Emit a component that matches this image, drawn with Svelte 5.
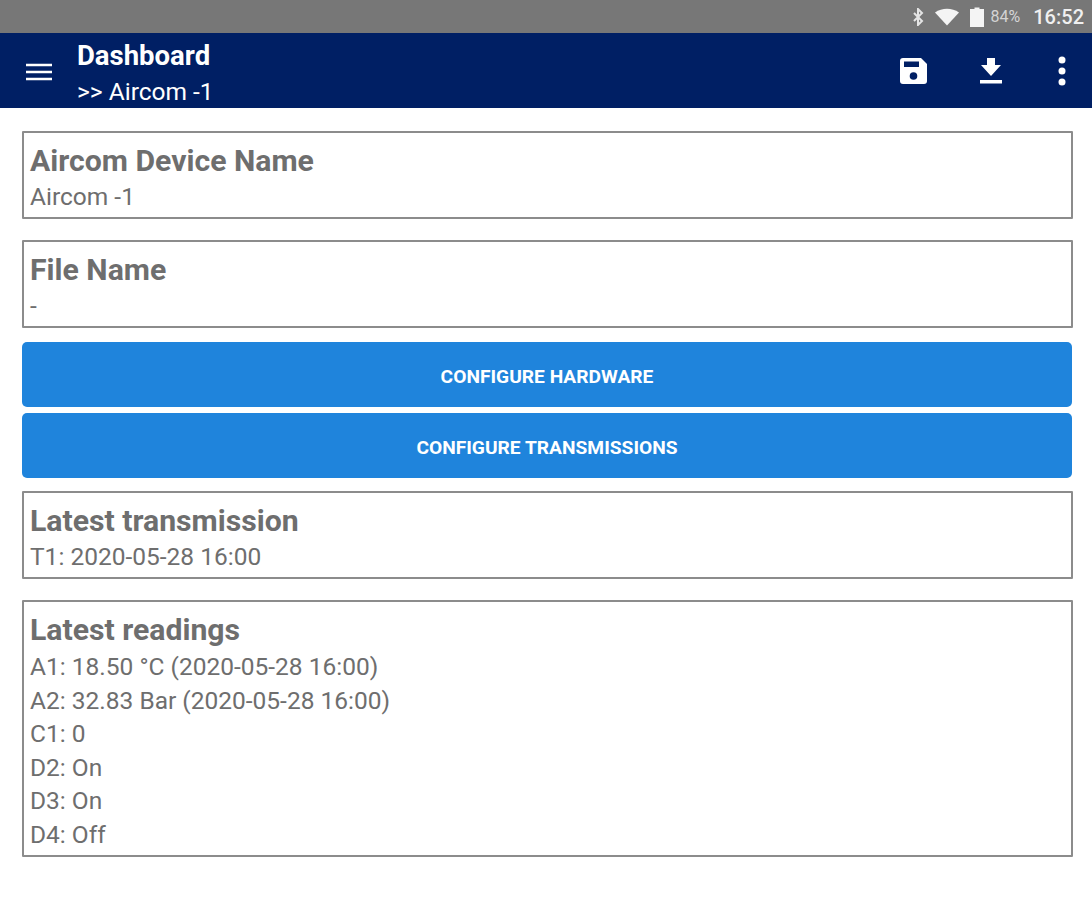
<script>
	const readings = [
		'A1: 18.50 °C (2020-05-28 16:00)',
		'A2: 32.83 Bar (2020-05-28 16:00)',
		'C1: 0',
		'D2: On',
		'D3: On',
		'D4: Off'
	];
</script>

<div class="screen">
	<div class="statusbar">
		<svg class="bt" viewBox="0 0 14 18" width="14" height="18">
			<path d="M3 5l8 8-4 4V1l4 4-8 8" fill="none" stroke="#e4e4e4" stroke-width="2" />
		</svg>
		<svg class="wifi" viewBox="0 0 24 18" width="24" height="18">
			<path d="M0 4.500C7-.5 17-.5 24 4.500L12 17.500z" fill="#f4f4f4" />
		</svg>
		<svg class="batt" viewBox="0 0 14 20" width="14" height="20">
			<path d="M4.500 0.500h5V2H14v18H0V2h4.500z" fill="#f4f4f4" />
		</svg>
		<span class="pct">84%</span>
		<span class="time">16:52</span>
	</div>

	<header class="appbar">
		<svg class="menu" viewBox="0 0 26 18" width="26" height="18">
			<path d="M0 2h26M0 9h26M0 16h26" stroke="#fff" stroke-width="2.600" />
		</svg>
		<div class="titles">
			<div class="title">Dashboard</div>
			<div class="subtitle">&gt;&gt; Aircom -1</div>
		</div>
		<div class="actions">
			<svg class="save" viewBox="0 0 27 26" width="27" height="26">
				<path d="M3 0h18l6 6v17a3 3 0 0 1-3 3H3a3 3 0 0 1-3-3V3a3 3 0 0 1 3-3z" fill="#fff" />
				<rect x="4" y="3.500" width="15" height="5.500" fill="#001f64" />
				<circle cx="13.500" cy="18" r="3.800" fill="#001f64" />
			</svg>
			<svg class="download" viewBox="0 0 22 26" width="22" height="26">
				<path d="M7 0h8v7h6L11 18 1 7h6zM0 22h22v3.500H0z" fill="#fff" />
			</svg>
			<svg viewBox="0 0 8 30" width="8" height="30">
				<circle cx="4" cy="4" r="3.500" fill="#fff" />
				<circle cx="4" cy="15" r="3.500" fill="#fff" />
				<circle cx="4" cy="26" r="3.500" fill="#fff" />
			</svg>
		</div>
	</header>

	<main class="content">
		<section class="card first">
			<h2>Aircom Device Name</h2>
			<p>Aircom -1</p>
		</section>
		<section class="card">
			<h2>File Name</h2>
			<p>-</p>
		</section>
		<button class="btn top">CONFIGURE HARDWARE</button>
		<button class="btn">CONFIGURE TRANSMISSIONS</button>
		<section class="card after">
			<h2>Latest transmission</h2>
			<p>T1: 2020-05-28 16:00</p>
		</section>
		<section class="card readings">
			<h2>Latest readings</h2>
			{#each readings as r}
				<p>{r}</p>
			{/each}
		</section>
	</main>
</div>

<style>
	:global(body) {
		background: #fff;
		font-family: Roboto, "Liberation Sans", sans-serif;
	}

	.screen {
		width: 1092px;
		height: 900px;
		overflow: hidden;
	}

	.statusbar {
		height: 33px;
		background: #777;
		display: flex;
		align-items: center;
		justify-content: flex-end;
		padding-right: 8px;
		color: #f0f0f0;
	}

	.bt {
		margin-right: 10px;
	}

	.wifi {
		margin-right: 11px;
	}

	.batt {
		margin-right: 7px;
	}

	.pct {
		font-size: 16px;
		color: #d4d4d4;
		margin-right: 13px;
	}

	.time {
		font-size: 20px;
		font-weight: 500;
		padding-top: 1px;
	}

	.appbar {
		height: 75px;
		background: #001f64;
		display: flex;
		align-items: center;
		padding-left: 26px;
		color: #fff;
	}

	.menu {
		margin: 3px 25px 0 0;
	}

	.titles {
		display: flex;
		flex-direction: column;
		gap: 7px;
		padding-top: 5px;
	}

	.title {
		font-size: 27.500px;
		line-height: 30px;
		font-weight: 700;
	}

	.subtitle {
		font-size: 24.500px;
		line-height: 27px;
	}

	.actions {
		margin-left: auto;
		display: flex;
		align-items: center;
		padding-right: 26px;
	}

	.save {
		margin-right: 53px;
	}

	.download {
		margin-right: 56px;
	}

	.content {
		padding: 23px 19px 0 22px;
		display: flex;
		flex-direction: column;
	}

	.card {
		border: 2px solid #8c8c8c;
		background: #fff;
		padding: 12px 6px 4px;
		margin-bottom: 21px;
		color: #6e6e6e;
		border-radius: 1px;
	}

	.readings {
		padding-bottom: 4px;
	}

	.readings h2 {
		margin-bottom: 4px;
	}

	h2 {
		margin: 0 0 2.500px;
		font-size: 30.200px;
		line-height: 32px;
		font-weight: 700;
	}

	p {
		margin: 0;
		font-size: 24.500px;
		line-height: 33.500px;
	}

	.btn {
		height: 65px;
		border: none;
		border-radius: 5px;
		background: #1f84dc;
		color: #fff;
		font-family: inherit;
		font-size: 19.200px;
		font-weight: 700;
		margin: 0 1px 6px 0;
		padding: 3px 0 0;
	}

	.card:has(+ .top) {
		margin-bottom: 14px;
	}

	.after {
		margin-top: 7px;
	}
</style>
